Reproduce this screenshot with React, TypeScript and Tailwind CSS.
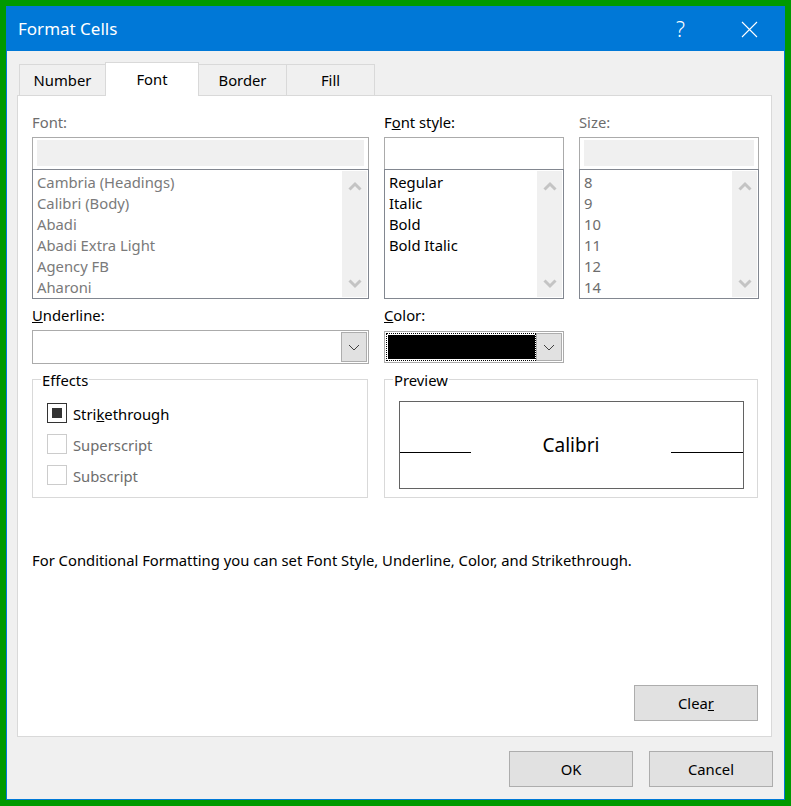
const fontList = ["Cambria (Headings)", "Calibri (Body)", "Abadi", "Abadi Extra Light", "Agency FB", "Aharoni"];
const styleList = ["Regular", "Italic", "Bold", "Bold Italic"];
const sizeList = ["8", "9", "10", "11", "12", "14"];

const Chevron = ({ up }: { up?: boolean }) => (
  <svg width="14" height="10" viewBox="0 0 14 10" fill="none" stroke="#c4c4c4" strokeWidth="3">
    <path d={up ? "M1.5 8.5 7 3l5.5 5.5" : "M1.5 1.5 7 7l5.5-5.5"} />
  </svg>
);

const SmallChevron = () => (
  <svg width="12" height="7" viewBox="0 0 12 7" fill="none" stroke="#404040" strokeWidth="1">
    <path d="M1 1l5 5 5-5" />
  </svg>
);

const ListBox = ({ items, className, width }: { items: string[]; className: string; width: string }) => (
  <div className={`flex h-[130px] -mt-px border border-[#828790] bg-white p-px ${width}`}>
    <div className={`flex-1 overflow-hidden pl-[3px] pt-[1px] ${className}`}>
      {items.map((item) => (
        <div key={item} className="h-[21px] leading-[21px] whitespace-nowrap">
          {item}
        </div>
      ))}
    </div>
    <div className="flex w-[25px] flex-col items-center justify-between bg-[#f0f0f0] pt-[10px] pb-[8px]">
      <Chevron up />
      <Chevron />
    </div>
  </div>
);

const TextBox = ({ disabled, width }: { disabled?: boolean; width: string }) => (
  <div className={`h-[33px] border border-[#ababab] bg-white px-[4px] py-[2px] ${width}`}>
    {disabled && <div className="h-[26px] bg-[#f0f0f0]" />}
  </div>
);

const Tab = ({ label, width, active }: { label: string; width: string; active?: boolean }) =>
  active ? (
    <div className={`z-10 -mb-px -ml-px flex h-[34px] items-center justify-center border border-b-0 border-[#d9d9d9] bg-white pb-[2px] ${width}`}>
      {label}
    </div>
  ) : (
    <div className={`flex h-[31px] items-center justify-center border border-b-0 border-l-0 border-[#d9d9d9] first:border-l ${width}`}>
      {label}
    </div>
  );

const CheckRow = ({ checked, children }: { checked?: boolean; children: React.ReactNode }) => (
  <div className="flex h-[20px] items-center gap-[6px]">
    <div className={`flex size-[20px] items-center justify-center border ${checked ? "border-[#333333]" : "border-[#cccccc]"}`}>
      {checked && <div className="size-[10px] bg-[#333333]" />}
    </div>
    <span className={`pt-px ${checked ? "text-black" : "text-[#6d6d6d]"}`}>{children}</span>
  </div>
);

const PushButton = ({ children }: { children: React.ReactNode }) => (
  <button className="h-[36px] w-[124px] border border-[#adadad] bg-[#e1e1e1] text-black">{children}</button>
);

export default function App() {
  return (
    <div className="h-[806px] w-[791px] bg-[#009900] p-[6px] font-['Noto_Sans',sans-serif] text-[14.8px] leading-[20px] text-black">
      <div className="flex h-full flex-col border border-[#0078d7] bg-[#f0f0f0]">
        {/* title bar */}
        <div className="flex h-[44px] items-center bg-[#0078d7] pl-[11px] pr-[26px] text-white">
          <span className="text-[17px]">Format Cells</span>
          <span className="ml-auto mr-[56px] text-[21px] font-light">?</span>
          <svg width="17" height="17" viewBox="0 0 17 17" stroke="#ffffff" strokeWidth="1.1">
            <path d="M1 1l15 15M16 1L1 16" />
          </svg>
        </div>

        {/* tabs */}
        <div className="mt-[11px] flex items-end pl-[12px]">
          <Tab label="Number" width="w-[87px]" />
          <Tab label="Font" width="w-[94px]" active />
          <Tab label="Border" width="w-[88px]" />
          <Tab label="Fill" width="w-[88px]" />
        </div>

        {/* panel */}
        <div className="ml-[10px] flex h-[642px] w-[755px] flex-col border border-[#d9d9d9] bg-white pl-[14px] pr-[12px] pt-[16px] pb-[15px]">
          <div className="flex gap-[15px]">
            <div>
              <div className="mb-[5px] text-[#6d6d6d]">Font:</div>
              <TextBox disabled width="w-[337px]" />
              <ListBox items={fontList} className="text-[#7a7a7a]" width="w-[337px]" />
            </div>
            <div>
              <div className="mb-[5px]">
                F<u>o</u>nt style:
              </div>
              <TextBox width="w-[180px]" />
              <ListBox items={styleList} className="text-black" width="w-[180px]" />
            </div>
            <div>
              <div className="mb-[5px] text-[#6d6d6d]">Size:</div>
              <TextBox disabled width="w-[180px]" />
              <ListBox items={sizeList} className="text-[#6d6d6d]" width="w-[180px]" />
            </div>
          </div>

          <div className="mt-[6px] flex gap-[15px]">
            <div>
              <div className="mb-[5px]">
                <u>U</u>nderline:
              </div>
              <div className="flex h-[34px] w-[337px] justify-end border border-[#ababab] bg-white p-px">
                <div className="flex w-[26px] items-center justify-center border border-[#adadad] bg-[#e1e1e1]">
                  <SmallChevron />
                </div>
              </div>
            </div>
            <div>
              <div className="mb-[6px]">
                <u>C</u>olor:
              </div>
              <div className="flex h-[32px] w-[180px] border border-[#ababab] bg-white p-px">
                <div className="flex-1 border border-dotted border-black py-px pl-px">
                  <div className="h-full bg-black" />
                </div>
                <div className="flex w-[26px] items-center justify-center border border-[#adadad] bg-[#e1e1e1]">
                  <SmallChevron />
                </div>
              </div>
            </div>
          </div>

          <div className="mt-[6px] flex gap-[16px]">
            <fieldset className="flex h-[128px] w-[336px] flex-col gap-[11px] border border-[#d9d9d9] pl-[14px] pt-[15px]">
              <legend className="-ml-[6px] px-px pt-[2px] leading-[16px]">Effects</legend>
              <CheckRow checked>
                Stri<u>k</u>ethrough
              </CheckRow>
              <CheckRow>Superscript</CheckRow>
              <CheckRow>Subscript</CheckRow>
            </fieldset>
            <fieldset className="h-[128px] w-[374px] border border-[#d9d9d9] pl-[14px] pt-[13px]">
              <legend className="-ml-[6px] px-px pt-[2px] leading-[16px]">Preview</legend>
              <div className="flex h-[88px] w-[345px] items-center border border-[#636363]">
                <div className="mt-[15px] h-px w-[71px] bg-black" />
                <div className="flex-1 text-center text-[19px]">Calibri</div>
                <div className="mt-[15px] h-px w-[72px] bg-black" />
              </div>
            </fieldset>
          </div>

          <p className="mt-[52px]">For Conditional Formatting you can set Font Style, Underline, Color, and Strikethrough.</p>

          <div className="mt-auto flex justify-end pr-[1px]">
            <PushButton>
              Clea<u>r</u>
            </PushButton>
          </div>
        </div>

        {/* footer */}
        <div className="flex justify-end gap-[16px] pr-[11px] pt-[14px]">
          <PushButton>OK</PushButton>
          <PushButton>Cancel</PushButton>
        </div>
      </div>
    </div>
  );
}
